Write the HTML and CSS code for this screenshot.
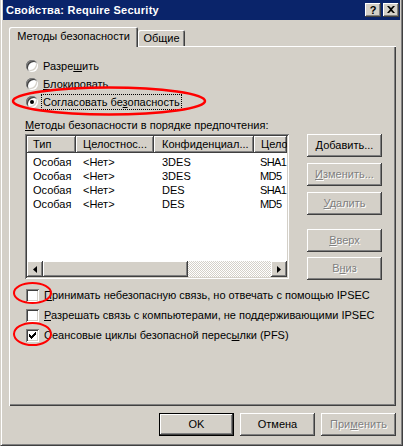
FILE: index.html
```html
<!DOCTYPE html>
<html lang="ru">
<head>
<meta charset="utf-8">
<title>Свойства: Require Security</title>
<link rel="stylesheet" href="styles.css">
</head>
<body>
<div class="window">
  <div class="titlebar">
    <span class="title">Свойства: Require Security</span>
    <div class="tbtns">
      <span class="tbtn help">?</span>
      <span class="tbtn close"><svg width="8" height="7" viewBox="0 0 8 7"><path d="M0 0h2l2 2 2-2h2L5 3.5 8 7H6L4 5 2 7H0l3-3.5z" fill="#000"/></svg></span>
    </div>
  </div>
  <div class="client">
    <div class="tabs">
      <div class="tab active">Методы безопасности</div>
      <div class="tab inactive">Общие</div>
    </div>
    <div class="panel">
      <div class="radio-row"><span class="radio"></span><span class="rlabel">Разре<u>ш</u>ить</span></div>
      <div class="radio-row"><span class="radio"></span><span class="rlabel"><u>Б</u>локировать</span></div>
      <div class="radio-row"><span class="radio checked"></span><span class="rlabel focus">Согласовать бе<u>з</u>опасность</span></div>
      <div class="group-label"><u>М</u>етоды безопасности в порядке предпочтения:</div>
      <div class="list-row">
        <div class="listview">
          <div class="lv-head">
            <div class="c1 th">Тип</div>
            <div class="c2 th">Целостнос...</div>
            <div class="c3 th">Конфиденциал...</div>
            <div class="c4 th">Цело</div>
          </div>
          <div class="lv-body">
            <div class="lv-row"><div class="c1 td">Особая</div><div class="c2 td">&lt;Нет&gt;</div><div class="c3 td">3DES</div><div class="c4 td">SHA1</div></div>
            <div class="lv-row"><div class="c1 td">Особая</div><div class="c2 td">&lt;Нет&gt;</div><div class="c3 td">3DES</div><div class="c4 td">MD5</div></div>
            <div class="lv-row"><div class="c1 td">Особая</div><div class="c2 td">&lt;Нет&gt;</div><div class="c3 td">DES</div><div class="c4 td">SHA1</div></div>
            <div class="lv-row"><div class="c1 td">Особая</div><div class="c2 td">&lt;Нет&gt;</div><div class="c3 td">DES</div><div class="c4 td">MD5</div></div>
          </div>
          <div class="hscroll">
            <div class="sb-btn"><svg width="4" height="7" viewBox="0 0 4 7"><path d="M4 0v7L0 3.5z" fill="#000"/></svg></div>
            <div class="sb-thumb"></div>
            <div class="sb-track"></div>
            <div class="sb-btn"><svg width="4" height="7" viewBox="0 0 4 7"><path d="M0 0v7l4-3.5z" fill="#000"/></svg></div>
          </div>
        </div>
        <div class="side-btns">
          <div class="btn b-add"><span><u>Д</u>обавить...</span></div>
          <div class="btn disabled b-edit"><span><u>И</u>зменить...</span></div>
          <div class="btn disabled b-del"><span><u>У</u>далить</span></div>
          <div class="btn disabled b-up"><span><u>В</u>верх</span></div>
          <div class="btn disabled b-down"><span>В<u>н</u>из</span></div>
        </div>
      </div>
      <div class="checks">
        <div class="check-row"><span class="cb"></span><span class="clabel"><u>П</u>ринимать небезопасную связь, но отвечать с помощью IPSEC</span></div>
        <div class="check-row"><span class="cb"></span><span class="clabel"><u>Р</u>азрешать связь с компьютерами, не поддерживающими IPSEC</span></div>
        <div class="check-row"><span class="cb"><svg width="13" height="13" viewBox="0 0 13 13" shape-rendering="crispEdges"><path d="M3 5h1v3H3zM4 6h1v3H4zM5 7h1v3H5zM6 6h1v3H6zM7 5h1v3H7zM8 4h1v3H8zM9 3h1v3H9z" fill="#000"/></svg></span><span class="clabel">Сеансовые циклы безопасной перес<u>ы</u>лки (PFS)</span></div>
      </div>
    </div>
    <div class="footer">
      <div class="btn default"><span>OK</span></div>
      <div class="btn"><span>Отмена</span></div>
      <div class="btn disabled"><span>При<u>м</u>енить</span></div>
    </div>
  </div>
  <svg class="annot" width="403" height="446" viewBox="0 0 403 446">
    <ellipse cx="108" cy="101" rx="96" ry="13.5" fill="none" stroke="#ff0000" stroke-width="2.5"/>
    <ellipse cx="31.5" cy="293" rx="18.5" ry="10" fill="none" stroke="#ff0000" stroke-width="2"/>
    <ellipse cx="31.5" cy="334" rx="18.5" ry="11" fill="none" stroke="#ff0000" stroke-width="2"/>
  </svg>
</div>
</body>
</html>
```
FILE: styles.css
```css
* { box-sizing: border-box; }
html, body { margin: 0; padding: 0; }
body {
  width: 403px;
  height: 446px;
  overflow: hidden;
  background: #d4d0c8;
  font-family: "Liberation Sans", Arial, sans-serif;
  font-size: 11px;
  color: #000;
}
u { text-decoration: underline; text-underline-offset: 1px; }

.window {
  position: relative;
  width: 403px;
  height: 446px;
  display: flex;
  flex-direction: column;
  background: #d4d0c8;
  border-left: 1px solid #d4d0c8;
  border-right: 1px solid #404040;
  border-bottom: 1px solid #404040;
  box-shadow: inset 1px 0 #fff, inset -1px -1px #808080;
  padding: 0 2px 1px 2px;
}

.titlebar {
  flex: none;
  height: 20px;
  background: #0a246a;
  display: flex;
  align-items: center;
  padding: 0 1px 0 3px;
  color: #fff;
  font-weight: bold;
  font-size: 11px;
}
.title { letter-spacing: 0.25px; }
.tbtns { margin-left: auto; display: flex; gap: 2px; }
.tbtn {
  width: 16px;
  height: 14px;
  background: #d4d0c8;
  box-shadow: inset -1px -1px #404040, inset 1px 1px #fff, inset -2px -2px #808080;
  display: flex;
  align-items: center;
  justify-content: center;
  color: #000;
  font-weight: bold;
  font-size: 11px;
  line-height: 14px;
  padding-bottom: 1px;
}
.tbtn svg { display: block; }

.client {
  flex: 1;
  display: flex;
  flex-direction: column;
  padding: 7px 4px 0 6px;
}

.tabs {
  display: flex;
  align-items: flex-start;
  height: 20px;
  margin-bottom: -1px;
  position: relative;
  z-index: 1;
}
.tab {
  background: #d4d0c8;
  text-align: center;
  white-space: nowrap;
  border-radius: 2px 2px 0 0;
}
.tab.active {
  width: 129px;
  height: 20px;
  line-height: 18px;
  box-shadow: inset 1px 1px #fff, inset -1px 0 #404040, inset -2px 0 #808080;
}
.tab.inactive {
  width: 47px;
  height: 16px;
  margin-top: 3px;
  line-height: 16px;
  box-shadow: inset 1px 1px #fff, inset -1px 0 #404040, inset -2px 0 #808080;
}

.panel {
  flex: none;
  height: 360px;
  background: #d4d0c8;
  box-shadow: inset 1px 1px #fff, inset -1px -1px #404040, inset -2px -2px #808080;
  padding: 11px 0 0 16px;
}

.radio-row {
  height: 18px;
  display: flex;
  align-items: center;
}
.radio {
  flex: none;
  width: 12px;
  height: 12px;
  margin-left: 1px;
  margin-right: 3px;
  border-radius: 50%;
  background: #fff;
  box-shadow: inset 1px 1px 0 #808080, inset -1px -1px 0 #fff, inset 2px 2px 0 #404040, inset -2px -2px 0 #d4d0c8;
  position: relative;
}
.radio.checked::after {
  content: "";
  position: absolute;
  left: 4px;
  top: 4px;
  width: 4px;
  height: 4px;
  border-radius: 50%;
  background: #000;
}
.rlabel {
  padding: 0 2px;
  height: 16px;
  line-height: 16px;
  white-space: nowrap;
}
.rlabel.focus { outline: 1px dotted #000; outline-offset: -1px; }

.group-label {
  margin-top: 7px;
  height: 14px;
  line-height: 14px;
  white-space: nowrap;
}

.list-row {
  margin-top: 2px;
  display: flex;
  align-items: flex-start;
}
.listview {
  flex: none;
  width: 264px;
  height: 145px;
  background: #fff;
  box-shadow: inset 1px 1px #808080, inset -1px -1px #fff, inset 2px 2px #404040, inset -2px -2px #d4d0c8;
  padding: 2px;
  display: flex;
  flex-direction: column;
  overflow: hidden;
}
.lv-head { flex: none; display: flex; height: 17px; }
.th {
  background: #d4d0c8;
  box-shadow: inset -1px -1px #404040, inset 1px 1px #fff, inset -2px -2px #808080;
  line-height: 17px;
  white-space: nowrap;
  overflow: hidden;
}
.c1 { flex: none; width: 49px; padding-left: 6px; }
.c2 { flex: none; width: 78px; padding-left: 7px; }
.c3 { flex: none; width: 100px; padding-left: 8px; }
.c4 { flex: 1; min-width: 0; padding-left: 7px; white-space: nowrap; overflow: hidden; }
.td.c4 { letter-spacing: -0.6px; padding-left: 6px; }
.lv-body { flex: 1; padding-top: 2px; }
.lv-row { display: flex; height: 14px; line-height: 14px; }
.td { white-space: nowrap; overflow: hidden; }

.hscroll { flex: none; height: 16px; display: flex; }
.sb-btn {
  flex: none;
  width: 16px;
  height: 16px;
  background: #d4d0c8;
  box-shadow: inset -1px -1px #404040, inset 1px 1px #fff, inset -2px -2px #808080;
  display: flex;
  align-items: center;
  justify-content: center;
}
.sb-btn svg { display: block; }
.sb-thumb {
  flex: none;
  width: 145px;
  background: #d4d0c8;
  box-shadow: inset -1px -1px #404040, inset 1px 1px #fff, inset -2px -2px #808080;
}
.sb-track {
  flex: 1;
  background-color: #fff;
  background-image: conic-gradient(#d4d0c8 25%, #fff 0 50%, #d4d0c8 0 75%, #fff 0);
  background-size: 2px 2px;
}

.side-btns {
  margin-left: 18px;
  display: flex;
  flex-direction: column;
}
.b-edit, .b-del { margin-top: 6px; }
.b-up { margin-top: 14px; }
.b-down { margin-top: 5px; }

.btn {
  width: 75px;
  height: 23px;
  background: #d4d0c8;
  box-shadow: inset -1px -1px #404040, inset 1px 1px #fff, inset -2px -2px #808080;
  display: flex;
  align-items: center;
  justify-content: center;
  white-space: nowrap;
  padding-bottom: 1px;
}
.btn.disabled { color: #808080; text-shadow: 1px 1px 0 #fff; }
.btn.default {
  box-shadow: inset 0 0 0 1px #000, inset -2px -2px #404040, inset 2px 2px #fff, inset -3px -3px #808080;
}

.checks { margin-top: 5px; }
.check-row {
  height: 20px;
  display: flex;
  align-items: center;
}
.cb {
  flex: none;
  width: 13px;
  height: 13px;
  margin-left: 1px;
  margin-right: 3px;
  background: #fff;
  box-shadow: inset 1px 1px #808080, inset -1px -1px #fff, inset 2px 2px #404040, inset -2px -2px #d4d0c8;
}
.cb svg { display: block; }
.clabel { padding: 0 2px; white-space: nowrap; line-height: 16px; }

.footer {
  margin-top: 7px;
  display: flex;
  justify-content: flex-end;
  gap: 6px;
}

.annot {
  position: absolute;
  left: 0;
  top: 0;
  pointer-events: none;
}
```
